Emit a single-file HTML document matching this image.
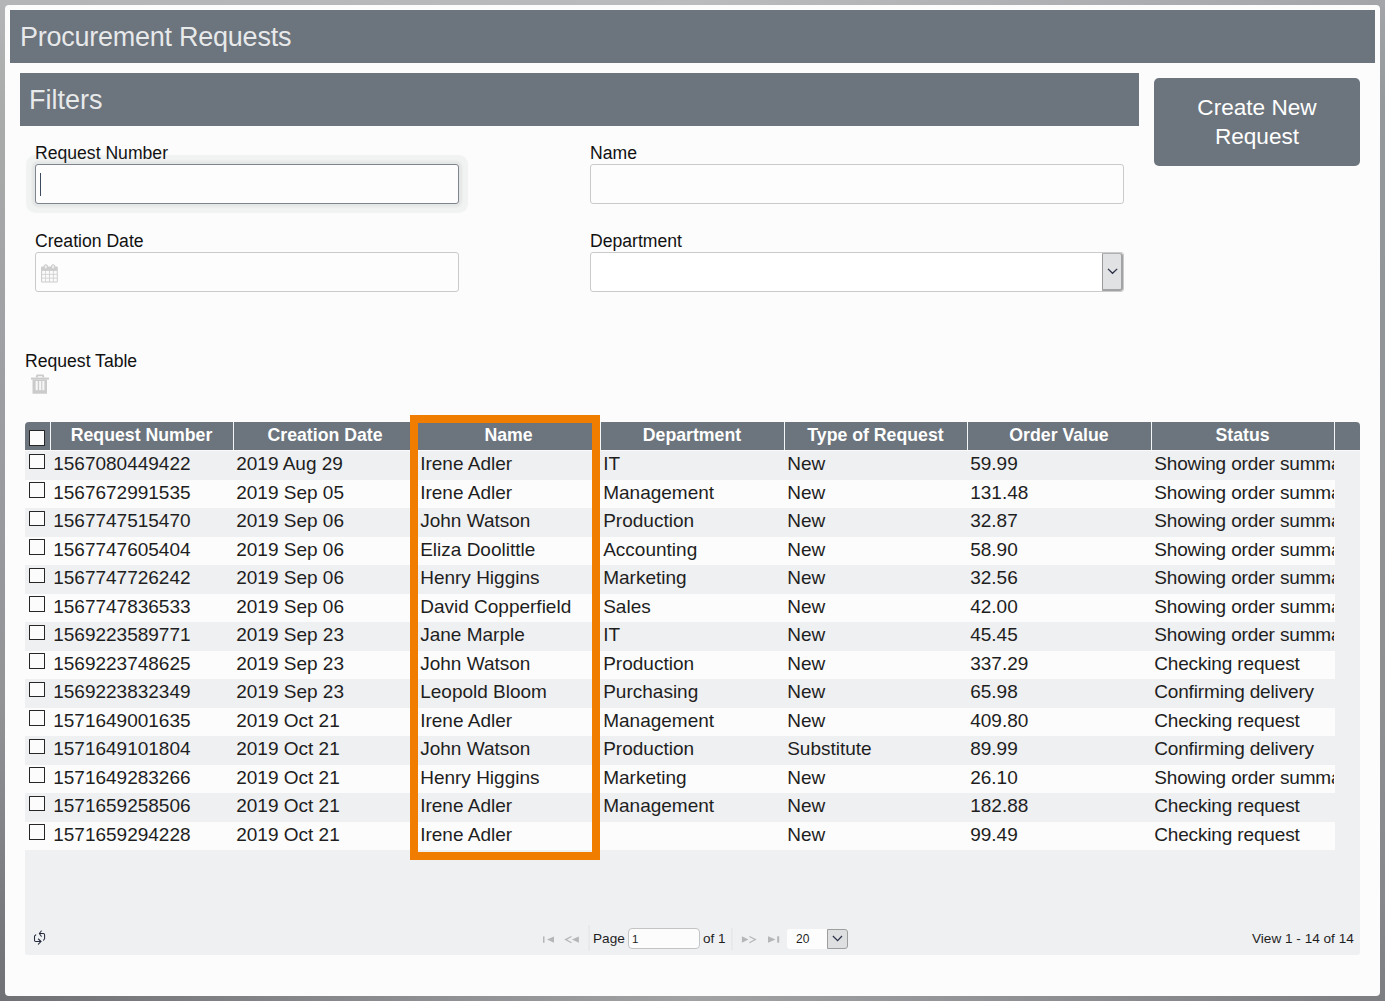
<!DOCTYPE html>
<html><head><meta charset="utf-8">
<style>
html,body{margin:0;padding:0;width:1385px;height:1001px;overflow:hidden;}
body{font-family:"Liberation Sans",sans-serif;background:linear-gradient(#b3b4b8,#8e8f93 60%,#727376);position:relative;}
.a{position:absolute;}
#panel{left:5px;top:5px;width:1375px;height:991px;background:#fcfcfc;border-radius:4px;}
.bar{background:#6c757d;color:#fff;}
#title{left:10px;top:10px;width:1365px;height:53px;}
#title span{position:absolute;left:10px;top:12px;font-size:27px;line-height:30px;white-space:nowrap;letter-spacing:-0.25px;color:rgba(255,255,255,0.85);}
#filters{left:20px;top:73px;width:1119px;height:53px;}
#filters span{position:absolute;left:9px;top:12px;font-size:27px;line-height:30px;color:rgba(255,255,255,0.85);}
#btn{left:1154px;top:78px;width:206px;height:88px;border-radius:5px;text-align:center;font-size:22.6px;line-height:29px;}
.lbl{font-size:17.6px;color:#111;white-space:nowrap;line-height:20px;}
.inp{background:#fdfdfd;border:1px solid #c9cacc;border-radius:3px;box-sizing:border-box;height:40px;}

#grid{left:25px;top:422px;width:1335px;height:533px;background:#eff0f2;border-radius:4px 4px 3px 3px;overflow:hidden;}
#ghead{left:0;top:0;width:1335px;height:28px;background:#6c757d;border-bottom:1px solid #fafafa;}
.cb{width:13.6px;height:13.6px;border:1.2px solid #262626;background:#fcfcfc;border-radius:0.5px;}
.hc{top:-1px;height:28px;line-height:28px;color:#fff;font-weight:bold;font-size:17.7px;text-align:center;white-space:nowrap;}
.hsep{top:0;width:1px;height:28px;background:#f4f5f6;}
.row{left:0;width:1310px;height:28.5px;}
.row.odd{background:#eff0f2;}
.row.even{background:#fcfcfc;}
.rcb{left:4px;top:2.6px;}
.td{top:-0.9px;line-height:28.5px;font-size:19px;color:#1e1e1e;white-space:nowrap;padding-left:3.2px;overflow:hidden;width:180.3px;}
</style></head><body>
<div class="a" style="left:0;top:0;width:6px;height:1001px;background:linear-gradient(#b4b5b7,#aaacab 10%,#9d9ea2 40%,#939496 70%,#7a7b7f 90%,#707174);"></div>
<div class="a" style="left:1379px;top:0;width:6px;height:1001px;background:linear-gradient(#a3a5a8,#95999c 10%,#909294 50%,#8e8f91 70%,#86878b 90%,#7d7e81);"></div>
<div class="a" style="left:0;top:0;width:1385px;height:6px;background:linear-gradient(to right,#b4b5b7,#babbbd 50%,#a3a5a8);"></div>
<div class="a" style="left:0;top:995px;width:1385px;height:6px;background:linear-gradient(to right,#707174,#a1a2a4 50%,#7d7e81);"></div>
<div class="a" id="panel"></div>
<div class="a bar" id="title"><span>Procurement Requests</span></div>
<div class="a bar" id="filters"><span>Filters</span></div>
<div class="a bar" id="btn"><div style="position:absolute;left:0;right:0;top:15px;">Create New<br>Request</div></div>

<div class="a lbl" style="left:35px;top:143px;">Request Number</div>
<div class="a lbl" style="left:590px;top:143px;">Name</div>
<div class="a lbl" style="left:35px;top:231px;">Creation Date</div>
<div class="a lbl" style="left:590px;top:231px;">Department</div>

<div class="a inp" style="left:35px;top:164px;width:424px;border-color:#7d858f;box-shadow:0 0 2px 3px rgba(108,117,125,0.09),0 0 1px 9px rgba(108,117,125,0.075);"></div>
<div class="a" style="left:40px;top:173px;width:1px;height:23px;background:#3c4a5e;"></div>
<div class="a inp" style="left:590px;top:164px;width:534px;"></div>
<div class="a inp" style="left:35px;top:252px;width:424px;"></div>
<div class="a inp" style="left:590px;top:252px;width:534px;background:#fff;"></div>

<div class="a lbl" style="left:25px;top:351px;">Request Table</div>


<!-- calendar icon -->
<svg class="a" style="left:41px;top:264px;" width="17" height="19" viewBox="0 0 17 19">
<rect x="0" y="2.6" width="16.8" height="15.9" rx="1" fill="#cdcdcd"/>
<g fill="#fafafa">
<rect x="1.1" y="6.9" width="3.1" height="3"/><rect x="4.9" y="6.9" width="3.1" height="3"/><rect x="8.8" y="6.9" width="3.1" height="3"/><rect x="12.7" y="6.9" width="3.1" height="3"/>
<rect x="1.1" y="10.7" width="3.1" height="3"/><rect x="4.9" y="10.7" width="3.1" height="3"/><rect x="8.8" y="10.7" width="3.1" height="3"/><rect x="12.7" y="10.7" width="3.1" height="3"/>
<rect x="1.1" y="14.5" width="3.1" height="3"/><rect x="4.9" y="14.5" width="3.1" height="3"/><rect x="8.8" y="14.5" width="3.1" height="3"/><rect x="12.7" y="14.5" width="3.1" height="3"/>
</g>
<rect x="3.2" y="0.7" width="3.2" height="4.4" rx="1.4" fill="#ececec" stroke="#c6c6c6" stroke-width="0.9"/>
<rect x="10.5" y="0.7" width="3.2" height="4.4" rx="1.4" fill="#ececec" stroke="#c6c6c6" stroke-width="0.9"/>
</svg>
<!-- select button -->
<div class="a" style="left:1102px;top:253px;width:21px;height:38px;background:#e1e2e4;box-sizing:border-box;border-left:1px solid #9a9a9a;border-top:1px solid #b0b0b0;border-right:2px solid #a3a3a3;border-bottom:2px solid #a3a3a3;border-radius:0 3px 3px 0;"></div>
<svg class="a" style="left:1100px;top:260px;" width="24" height="24" viewBox="0 0 24 24"><path d="M8 8.9 L12.5 13.3 L17.2 8.9" fill="none" stroke="#2b3047" stroke-width="1.3"/></svg>
<!-- trash -->
<svg class="a" style="left:31px;top:374px;" width="18" height="20" viewBox="0 0 18 20">
<path d="M5.6 3.6 L6.2 1.4 H11.9 L12.5 3.6" fill="none" stroke="#cbcbcb" stroke-width="1.8"/>
<rect x="0" y="3.6" width="18" height="2" fill="#cbcbcb"/>
<path d="M1.5 5.5 H16 V19.2 Q16 19.8 15.4 19.8 H2.1 Q1.5 19.8 1.5 19.2 Z" fill="#cbcbcb"/>
<g fill="#f6f6f6"><rect x="4.6" y="7" width="2.2" height="9.2"/><rect x="8.1" y="7" width="2.1" height="9.2"/><rect x="11.3" y="7" width="2.1" height="9.2"/></g>
</svg>
<div class="a" id="grid">
<div class="a" id="ghead">
<div class="a cb" style="left:4px;top:8px;"></div>
<div class="a hc" style="left:25.0px;width:183.0px;">Request Number</div>
<div class="a hc" style="left:208.0px;width:184.0px;">Creation Date</div>
<div class="a hc" style="left:392.0px;width:183.0px;">Name</div>
<div class="a hc" style="left:575.0px;width:184.0px;">Department</div>
<div class="a hc" style="left:759.0px;width:183.0px;">Type of Request</div>
<div class="a hc" style="left:942.0px;width:184.0px;">Order Value</div>
<div class="a hc" style="left:1126.0px;width:183.0px;">Status</div>
<div class="a hsep" style="left:25.0px;"></div>
<div class="a hsep" style="left:208.0px;"></div>
<div class="a hsep" style="left:392.0px;"></div>
<div class="a hsep" style="left:575.0px;"></div>
<div class="a hsep" style="left:759.0px;"></div>
<div class="a hsep" style="left:942.0px;"></div>
<div class="a hsep" style="left:1126.0px;"></div>
<div class="a hsep" style="left:1309.0px;"></div>
</div>
<div class="a row odd" style="top:29.30px;">
<div class="a cb rcb"></div>
<div class="a td" style="left:25.0px;">1567080449422</div>
<div class="a td" style="left:208.0px;">2019 Aug 29</div>
<div class="a td" style="left:392.0px;">Irene Adler</div>
<div class="a td" style="left:575.0px;">IT</div>
<div class="a td" style="left:759.0px;">New</div>
<div class="a td" style="left:942.0px;">59.99</div>
<div class="a td" style="left:1126.0px;letter-spacing:-0.15px;">Showing order summary</div>
</div>
<div class="a row even" style="top:57.80px;">
<div class="a cb rcb"></div>
<div class="a td" style="left:25.0px;">1567672991535</div>
<div class="a td" style="left:208.0px;">2019 Sep 05</div>
<div class="a td" style="left:392.0px;">Irene Adler</div>
<div class="a td" style="left:575.0px;">Management</div>
<div class="a td" style="left:759.0px;">New</div>
<div class="a td" style="left:942.0px;">131.48</div>
<div class="a td" style="left:1126.0px;letter-spacing:-0.15px;">Showing order summary</div>
</div>
<div class="a row odd" style="top:86.30px;">
<div class="a cb rcb"></div>
<div class="a td" style="left:25.0px;">1567747515470</div>
<div class="a td" style="left:208.0px;">2019 Sep 06</div>
<div class="a td" style="left:392.0px;">John Watson</div>
<div class="a td" style="left:575.0px;">Production</div>
<div class="a td" style="left:759.0px;">New</div>
<div class="a td" style="left:942.0px;">32.87</div>
<div class="a td" style="left:1126.0px;letter-spacing:-0.15px;">Showing order summary</div>
</div>
<div class="a row even" style="top:114.80px;">
<div class="a cb rcb"></div>
<div class="a td" style="left:25.0px;">1567747605404</div>
<div class="a td" style="left:208.0px;">2019 Sep 06</div>
<div class="a td" style="left:392.0px;">Eliza Doolittle</div>
<div class="a td" style="left:575.0px;">Accounting</div>
<div class="a td" style="left:759.0px;">New</div>
<div class="a td" style="left:942.0px;">58.90</div>
<div class="a td" style="left:1126.0px;letter-spacing:-0.15px;">Showing order summary</div>
</div>
<div class="a row odd" style="top:143.30px;">
<div class="a cb rcb"></div>
<div class="a td" style="left:25.0px;">1567747726242</div>
<div class="a td" style="left:208.0px;">2019 Sep 06</div>
<div class="a td" style="left:392.0px;">Henry Higgins</div>
<div class="a td" style="left:575.0px;">Marketing</div>
<div class="a td" style="left:759.0px;">New</div>
<div class="a td" style="left:942.0px;">32.56</div>
<div class="a td" style="left:1126.0px;letter-spacing:-0.15px;">Showing order summary</div>
</div>
<div class="a row even" style="top:171.80px;">
<div class="a cb rcb"></div>
<div class="a td" style="left:25.0px;">1567747836533</div>
<div class="a td" style="left:208.0px;">2019 Sep 06</div>
<div class="a td" style="left:392.0px;">David Copperfield</div>
<div class="a td" style="left:575.0px;">Sales</div>
<div class="a td" style="left:759.0px;">New</div>
<div class="a td" style="left:942.0px;">42.00</div>
<div class="a td" style="left:1126.0px;letter-spacing:-0.15px;">Showing order summary</div>
</div>
<div class="a row odd" style="top:200.30px;">
<div class="a cb rcb"></div>
<div class="a td" style="left:25.0px;">1569223589771</div>
<div class="a td" style="left:208.0px;">2019 Sep 23</div>
<div class="a td" style="left:392.0px;">Jane Marple</div>
<div class="a td" style="left:575.0px;">IT</div>
<div class="a td" style="left:759.0px;">New</div>
<div class="a td" style="left:942.0px;">45.45</div>
<div class="a td" style="left:1126.0px;letter-spacing:-0.15px;">Showing order summary</div>
</div>
<div class="a row even" style="top:228.80px;">
<div class="a cb rcb"></div>
<div class="a td" style="left:25.0px;">1569223748625</div>
<div class="a td" style="left:208.0px;">2019 Sep 23</div>
<div class="a td" style="left:392.0px;">John Watson</div>
<div class="a td" style="left:575.0px;">Production</div>
<div class="a td" style="left:759.0px;">New</div>
<div class="a td" style="left:942.0px;">337.29</div>
<div class="a td" style="left:1126.0px;letter-spacing:-0.15px;">Checking request</div>
</div>
<div class="a row odd" style="top:257.30px;">
<div class="a cb rcb"></div>
<div class="a td" style="left:25.0px;">1569223832349</div>
<div class="a td" style="left:208.0px;">2019 Sep 23</div>
<div class="a td" style="left:392.0px;">Leopold Bloom</div>
<div class="a td" style="left:575.0px;">Purchasing</div>
<div class="a td" style="left:759.0px;">New</div>
<div class="a td" style="left:942.0px;">65.98</div>
<div class="a td" style="left:1126.0px;letter-spacing:-0.15px;">Confirming delivery</div>
</div>
<div class="a row even" style="top:285.80px;">
<div class="a cb rcb"></div>
<div class="a td" style="left:25.0px;">1571649001635</div>
<div class="a td" style="left:208.0px;">2019 Oct 21</div>
<div class="a td" style="left:392.0px;">Irene Adler</div>
<div class="a td" style="left:575.0px;">Management</div>
<div class="a td" style="left:759.0px;">New</div>
<div class="a td" style="left:942.0px;">409.80</div>
<div class="a td" style="left:1126.0px;letter-spacing:-0.15px;">Checking request</div>
</div>
<div class="a row odd" style="top:314.30px;">
<div class="a cb rcb"></div>
<div class="a td" style="left:25.0px;">1571649101804</div>
<div class="a td" style="left:208.0px;">2019 Oct 21</div>
<div class="a td" style="left:392.0px;">John Watson</div>
<div class="a td" style="left:575.0px;">Production</div>
<div class="a td" style="left:759.0px;">Substitute</div>
<div class="a td" style="left:942.0px;">89.99</div>
<div class="a td" style="left:1126.0px;letter-spacing:-0.15px;">Confirming delivery</div>
</div>
<div class="a row even" style="top:342.80px;">
<div class="a cb rcb"></div>
<div class="a td" style="left:25.0px;">1571649283266</div>
<div class="a td" style="left:208.0px;">2019 Oct 21</div>
<div class="a td" style="left:392.0px;">Henry Higgins</div>
<div class="a td" style="left:575.0px;">Marketing</div>
<div class="a td" style="left:759.0px;">New</div>
<div class="a td" style="left:942.0px;">26.10</div>
<div class="a td" style="left:1126.0px;letter-spacing:-0.15px;">Showing order summary</div>
</div>
<div class="a row odd" style="top:371.30px;">
<div class="a cb rcb"></div>
<div class="a td" style="left:25.0px;">1571659258506</div>
<div class="a td" style="left:208.0px;">2019 Oct 21</div>
<div class="a td" style="left:392.0px;">Irene Adler</div>
<div class="a td" style="left:575.0px;">Management</div>
<div class="a td" style="left:759.0px;">New</div>
<div class="a td" style="left:942.0px;">182.88</div>
<div class="a td" style="left:1126.0px;letter-spacing:-0.15px;">Checking request</div>
</div>
<div class="a row even" style="top:399.80px;">
<div class="a cb rcb"></div>
<div class="a td" style="left:25.0px;">1571659294228</div>
<div class="a td" style="left:208.0px;">2019 Oct 21</div>
<div class="a td" style="left:392.0px;">Irene Adler</div>
<div class="a td" style="left:575.0px;"></div>
<div class="a td" style="left:759.0px;">New</div>
<div class="a td" style="left:942.0px;">99.49</div>
<div class="a td" style="left:1126.0px;letter-spacing:-0.15px;">Checking request</div>
</div>
</div>
<!-- orange highlight -->
<div class="a" style="left:410px;top:415px;width:190px;height:445px;box-sizing:border-box;border:8px solid #f07d00;"></div>
<!-- footer -->
<svg class="a" style="left:28px;top:925px;" width="24" height="25" viewBox="28 925 24 25">
<g fill="none" stroke="#262b3e" stroke-width="1.05" stroke-linecap="round" stroke-linejoin="round">
<path d="M35.8 934.8 L34.5 936.2 V940.3 Q34.5 941.5 35.7 941.5 H40.8"/>
<path d="M38.4 939 L41 941.5 L38.4 944.2"/>
<path d="M43.5 940.2 L44.6 938.8 V934.8 Q44.6 933.5 43.3 933.5 H39.6"/>
<path d="M41.3 931 L39.3 933.5 L41.3 936.3"/>
</g></svg>
<svg class="a" style="left:530px;top:920px;" width="330" height="35" viewBox="530 920 330 35">
<g fill="#b5b6b8">
<rect x="543" y="936.4" width="1.5" height="6.4"/>
<path d="M547 939.6 L554 936.4 V942.8 Z"/>
<path d="M571.9 939.6 L578.9 936.4 V942.8 Z"/>
<path d="M741.9 936.3 V942.7 L748.5 939.5 Z"/>
<path d="M768 936.3 V942.7 L775.5 939.5 Z"/>
<rect x="777.2" y="936.3" width="2" height="6.4"/>
</g>
<g fill="none" stroke="#b5b6b8" stroke-width="1.3">
<path d="M571.5 936.5 L565.6 939.6 L571.5 942.8"/>
<path d="M749.4 936.5 L755.3 939.5 L749.4 942.7"/>
</g>
<rect x="588.3" y="925" width="1.5" height="26" fill="#e6e7e9"/>
<rect x="731.1" y="928" width="1.5" height="22" fill="#e6e7e9"/>
</svg>
<div class="a" style="left:593px;top:929px;font-size:13.6px;line-height:20px;color:#1e1e1e;">Page</div>
<div class="a" style="left:628px;top:928px;width:72px;height:21px;box-sizing:border-box;background:#fcfcfc;border:1px solid #c3c4c6;border-radius:4px;font-size:11.5px;line-height:20px;padding-left:3px;color:#1e1e1e;">1</div>
<div class="a" style="left:703px;top:929px;font-size:13.5px;line-height:20px;color:#1e1e1e;">of 1</div>
<div class="a" style="left:787px;top:929px;width:61px;height:20px;box-sizing:border-box;background:#fdfdfd;border-radius:3px;font-size:12px;line-height:20px;padding-left:9px;color:#1e1e1e;">20</div>
<div class="a" style="left:827px;top:929px;width:21px;height:20px;box-sizing:border-box;background:#dedfe1;border:1px solid #9d9d9d;border-radius:0 3px 3px 0;"></div>
<svg class="a" style="left:827px;top:929px;" width="21" height="20" viewBox="0 0 21 20"><path d="M5.9 7 L10.6 11.6 L15 7" fill="none" stroke="#2b3047" stroke-width="1.2"/></svg>
<div class="a" style="left:1252px;top:929px;font-size:13.6px;line-height:20px;color:#1e1e1e;white-space:nowrap;">View 1 - 14 of 14</div>

</body></html>
